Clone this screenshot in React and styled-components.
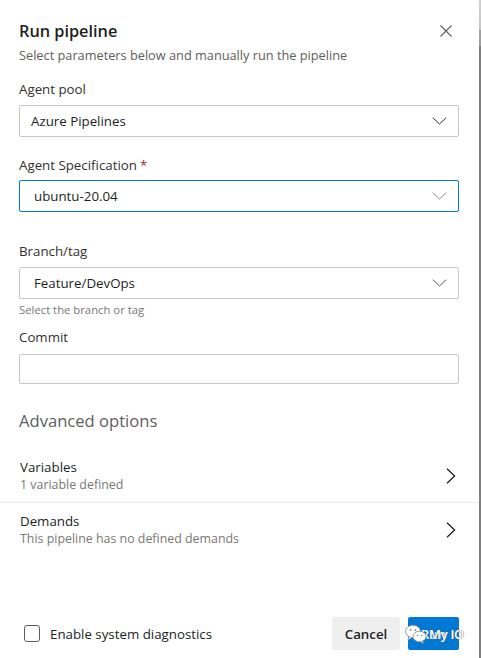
import React from "react";
import styled, { createGlobalStyle } from "styled-components";

const Global = createGlobalStyle`
  html, body { margin: 0; padding: 0; background: #fff; }
  body { font-family: "Open Sans", "Noto Sans", sans-serif; color: #323130; }
  * { box-sizing: border-box; }
`;

const Page = styled.div`
  display: flex;
  width: 481px;
  height: 658px;
  background: #fff;
`;

const Dialog = styled.div`
  flex: 1;
  display: flex;
  flex-direction: column;
  padding-top: 19px;
`;

const ScrollStrip = styled.div`
  width: 2px;
  background: linear-gradient(
    to bottom,
    #d0d0d0 0px,
    #c6c6c6 30px,
    #a0a0a0 30px,
    #a0a0a0 46px,
    #7f7f7f 46px,
    #7f7f7f 100%
  );
`;

const Body = styled.div`
  display: flex;
  flex-direction: column;
  padding: 0 20px 0 19px;
`;

const Header = styled.div`
  display: flex;
  align-items: flex-start;
  justify-content: space-between;
`;

const Title = styled.h1`
  margin: 0;
  font-size: 16.3px;
  line-height: 24px;
  font-weight: 600;
  color: #201f1e;
`;

const CloseButton = styled.button`
  border: 0;
  background: none;
  padding: 0;
  margin: 6px 7px 0 0;
  width: 12px;
  height: 12px;
  display: flex;
  color: #605e5c;
`;

const Subtitle = styled.div`
  margin-top: 3px;
  font-size: 12.75px;
  line-height: 18px;
  color: #605e5c;
`;

const Label = styled.div`
  margin-top: ${(p) => p.$mt}px;
  font-size: 13.3px;
  line-height: 20px;
  color: #323130;
`;

const Required = styled.span`
  color: #a4262c;
  margin-left: 3px;
`;

const Select = styled.div`
  margin-top: ${(p) => p.$mt ?? 6}px;
  height: 32px;
  display: flex;
  align-items: center;
  justify-content: space-between;
  padding: 0 11px 0 ${(p) => p.$indent ?? 11}px;
  border: 1px solid ${(p) => (p.$focused ? "#0078d4" : "#c8c6c4")};
  border-radius: 2px;
  font-size: 13.3px;
  color: #201f1e;
  background: #fff;
`;

const TextInput = styled.div`
  margin-top: 7px;
  height: 30px;
  border: 1px solid #c8c6c4;
  border-radius: 2px;
`;

const Helper = styled.div`
  margin-top: 3px;
  font-size: 11.3px;
  line-height: 16px;
  color: #797775;
`;

const SectionTitle = styled.div`
  margin-top: 25px;
  font-size: 16.6px;
  line-height: 24px;
  color: #605e5c;
`;

const Rows = styled.div`
  margin-top: 26px;
  display: flex;
  flex-direction: column;
`;

const Row = styled.div`
  display: flex;
  align-items: center;
  justify-content: space-between;
  padding: ${(p) => p.$pad};
  border-bottom: ${(p) => (p.$divider ? "1px solid #ebebeb" : "none")};
`;

const RowText = styled.div`
  display: flex;
  flex-direction: column;
  padding-left: 20px;
`;

const RowTitle = styled.div`
  font-size: 13.3px;
  line-height: 17px;
  color: #201f1e;
`;

const RowSub = styled.div`
  font-size: 12.4px;
  line-height: 17px;
  color: #797775;
`;

const Chevron = styled.div`
  width: 10px;
  height: 16px;
  margin-right: 23px;
  display: flex;
  color: #201f1e;
`;

const Spacer = styled.div`
  flex: 1;
`;

const Footer = styled.div`
  display: flex;
  align-items: center;
  justify-content: space-between;
  padding: 0 20px 8px 24px;
`;

const CheckLabel = styled.label`
  display: flex;
  align-items: center;
  gap: 10px;
  font-size: 13.3px;
  color: #201f1e;
`;

const CheckBox = styled.span`
  width: 16px;
  height: 17px;
  border: 1px solid #605e5c;
  border-radius: 3px;
  display: inline-block;
`;

const Buttons = styled.div`
  display: flex;
  gap: 8px;
  position: relative;
`;

const Button = styled.button`
  height: 33px;
  padding: 0;
  width: ${(p) => p.$w}px;
  border: 0;
  border-radius: 2px;
  font-family: inherit;
  font-size: 13.3px;
  font-weight: 600;
  background: ${(p) => (p.$primary ? "#0078d4" : "#efefef")};
  color: ${(p) => (p.$primary ? "#fff" : "#201f1e")};
`;

const Watermark = styled.div`
  position: absolute;
  left: 73px;
  top: 7px;
  display: flex;
  align-items: center;
  white-space: nowrap;
  pointer-events: none;
`;

const WatermarkText = styled.span`
  margin-left: 2px;
  font-size: 13px;
  font-weight: 600;
  color: #fff;
  letter-spacing: -0.3px;
  white-space: nowrap;
  text-shadow: 0 0 1px #666, 0 0 1px #666;
`;

const ChevronDown = ({ color = "#323130" }) => (
  <svg width="15" height="8" viewBox="0 0 15 8" fill="none">
    <path d="M0.7 0.6 L7.5 7 L14.3 0.6" stroke={color} strokeWidth="1" />
  </svg>
);

const ChevronRight = () => (
  <svg width="10" height="16" viewBox="0 0 10 16" fill="none">
    <path d="M1 0.8 L8.6 8 L1 15.2" stroke="currentColor" strokeWidth="1.3" />
  </svg>
);

const CloseIcon = () => (
  <svg width="12" height="12" viewBox="0 0 12 12" fill="none">
    <path d="M0.5 0.5 L11.5 11.5 M11.5 0.5 L0.5 11.5" stroke="currentColor" strokeWidth="1.1" />
  </svg>
);

const WeChatIcon = () => (
  <svg width="22" height="20" viewBox="0 0 22 20">
    <ellipse cx="8" cy="7.5" rx="7.5" ry="6.3" fill="#fff" stroke="#888" strokeWidth="0.8" />
    <path d="M4 12.5 L3 16 L7 13.5 Z" fill="#fff" stroke="#888" strokeWidth="0.6" />
    <ellipse cx="14.5" cy="12.5" rx="6.5" ry="5.3" fill="#fff" stroke="#888" strokeWidth="0.8" />
    <path d="M17.5 16.8 L18.5 19.5 L15 17.5 Z" fill="#fff" stroke="#888" strokeWidth="0.6" />
    <circle cx="5.5" cy="6" r="0.9" fill="#888" />
    <circle cx="10.5" cy="6" r="0.9" fill="#888" />
    <circle cx="12.5" cy="11.5" r="0.8" fill="#888" />
    <circle cx="16.5" cy="11.5" r="0.8" fill="#888" />
  </svg>
);

export default function App() {
  return (
    <>
      <Global />
      <Page>
        <Dialog>
          <Body>
            <Header>
              <Title>Run pipeline</Title>
              <CloseButton aria-label="Close">
                <CloseIcon />
              </CloseButton>
            </Header>
            <Subtitle>Select parameters below and manually run the pipeline</Subtitle>

            <Label $mt={15}>Agent pool</Label>
            <Select>
              <span>Azure Pipelines</span>
              <ChevronDown />
            </Select>

            <Label $mt={18}>
              Agent Specification<Required>*</Required>
            </Label>
            <Select $mt={5} $focused $indent={14}>
              <span>ubuntu-20.04</span>
              <ChevronDown color="#8a8886" />
            </Select>

            <Label $mt={29}>Branch/tag</Label>
            <Select $indent={14}>
              <span>Feature/DevOps</span>
              <ChevronDown color="#605e5c" />
            </Select>
            <Helper>Select the branch or tag</Helper>

            <Label $mt={9}>Commit</Label>
            <TextInput />

            <SectionTitle>Advanced options</SectionTitle>
          </Body>

          <Rows>
            <Row $pad="0 0 9px 0" $divider>
              <RowText>
                <RowTitle>Variables</RowTitle>
                <RowSub>1 variable defined</RowSub>
              </RowText>
              <Chevron>
                <ChevronRight />
              </Chevron>
            </Row>
            <Row $pad="10px 0 0 0">
              <RowText>
                <RowTitle>Demands</RowTitle>
                <RowSub>This pipeline has no defined demands</RowSub>
              </RowText>
              <Chevron>
                <ChevronRight />
              </Chevron>
            </Row>
          </Rows>

          <Spacer />

          <Footer>
            <CheckLabel>
              <CheckBox />
              Enable system diagnostics
            </CheckLabel>
            <Buttons>
              <Button $w={68}>Cancel</Button>
              <Button $w={51} $primary>Run</Button>
              <Watermark>
                <WeChatIcon />
                <WatermarkText>My IO</WatermarkText>
              </Watermark>
            </Buttons>
          </Footer>
        </Dialog>
        <ScrollStrip />
      </Page>
    </>
  );
}
